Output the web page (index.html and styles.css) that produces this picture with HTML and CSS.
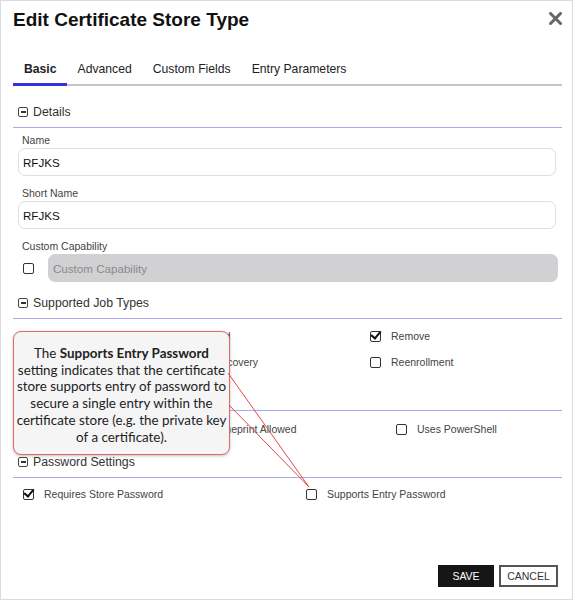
FILE: index.html
```html
<!DOCTYPE html>
<html lang="en">
<head>
    <meta charset="UTF-8">
    <meta name="viewport" content="width=device-width, initial-scale=1.0">
    <title>Edit Certificate Store Type</title>
    <link rel="stylesheet" href="styles.css">
</head>
<body>
  <div class="dialog">

    <div class="dialog-head">
      <h1>Edit Certificate Store Type</h1>
      <button class="close" type="button">
        <svg width="13" height="13" viewBox="0 0 13 13"><path d="M1.5 1.5 L11.5 11.5 M11.5 1.5 L1.5 11.5" stroke="#666" stroke-width="3" stroke-linecap="square"/></svg>
      </button>
    </div>

    <div class="tabs">
      <span class="tab active">Basic</span>
      <span class="tab">Advanced</span>
      <span class="tab">Custom Fields</span>
      <span class="tab">Entry Parameters</span>
    </div>

    <!-- details -->
    <div class="group first">
      <div class="group-title"><span class="toggle"></span>Details</div>
      <div class="group-body fields">
        <label class="field-label">Name</label>
        <div class="text-input">RFJKS</div>
        <label class="field-label">Short Name</label>
        <div class="text-input">RFJKS</div>
        <label class="field-label">Custom Capability</label>
        <div class="capability">
          <span class="box"></span>
          <div class="text-input disabled">Custom Capability</div>
        </div>
      </div>
    </div>

    <!-- job types -->
    <div class="group">
      <div class="group-title"><span class="toggle"></span>Supported Job Types</div>
      <div class="group-body checks jobs">
        <div class="check"><span class="box"></span>Inventory</div>
        <div class="check"><span class="box"></span>Add</div>
        <div class="check"><span class="box on"></span>Remove</div>
        <div class="check"><span class="box"></span>Create</div>
        <div class="check"><span class="box"></span>Discovery</div>
        <div class="check"><span class="box"></span>Reenrollment</div>
      </div>
    </div>

    <div class="group">
      <div class="group-title"><span class="toggle"></span>General Settings</div>
      <div class="group-body checks general">
        <div class="check"><span class="box"></span>Needs Server</div>
        <div class="check"><span class="box"></span>Blueprint Allowed</div>
        <div class="check"><span class="box"></span>Uses PowerShell</div>
      </div>
    </div>

    <div class="group">
      <div class="group-title"><span class="toggle"></span>Password Settings</div>
      <div class="group-body checks passwords">
        <div class="check"><span class="box on"></span>Requires Store Password</div>
        <div class="check"><span class="box"></span>Supports Entry Password</div>
      </div>
    </div>

    <div class="actions">
      <button class="btn save" type="button">SAVE</button>
      <button class="btn cancel" type="button">CANCEL</button>
    </div>

    <!-- callout -->
    <div class="callout">
      The <b>Supports Entry Password</b> setting indicates that the certificate store supports entry of password to secure a single entry within the certificate store (e.g. the private key of a certificate).
    </div>
    <svg class="pointer" width="574" height="601" viewBox="0 0 574 601">
      <polyline points="228,373 309,487 229,405" fill="none" stroke="#e2484b" stroke-width="1"/>
    </svg>
  </div>
</body>
</html>
```

FILE: styles.css
```css
* {
  box-sizing: border-box;
}

body {
  margin: 0;
  background: #fff;
  font-family: "Liberation Sans", Arial, sans-serif;
  color: #333;
}

.dialog {
  position: relative;
  width: 573px;
  height: 600px;
  border: 1px solid #dcdcdc;
  padding: 0 10px 12px 12px;
  display: flex;
  flex-direction: column;
  background: #fff;
}

.dialog-head {
  display: flex;
  justify-content: space-between;
  align-items: flex-start;
  padding-top: 8px;
}

.dialog-head h1 {
  margin: 0;
  font-size: 19px;
  line-height: 22px;
  font-weight: bold;
  color: #111;
}

.close {
  border: 0;
  background: none;
  padding: 0;
  margin: 3px 0 0 0;
  line-height: 0;
}

/* tabs */
.tabs {
  display: flex;
  margin-top: 30px;
  border-bottom: 2px solid #c6c6c6;
}

.tab {
  font-size: 12.2px;
  line-height: 16px;
  padding: 0 10px 6px 11px;
  color: #222;
  margin-bottom: -2px;
  border-bottom: 3px solid transparent;
}

.tab.active {
  font-weight: bold;
  border-bottom-color: #3434d6;
}

/* groups */
.group-title {
  display: flex;
  align-items: center;
  height: 26px;
  padding: 0 0 5px 5px;
  border-bottom: 1px solid #a9a9f3;
  font-size: 12.3px;
  color: #333;
}

.group.first .group-title {
  margin-top: 16px;
}

.toggle {
  width: 10px;
  height: 10px;
  border: 1.3px solid #444;
  border-radius: 2px;
  margin-right: 5px;
  position: relative;
}

.toggle::after {
  content: "";
  position: absolute;
  left: 1.5px;
  right: 1.5px;
  top: 3.3px;
  height: 1.4px;
  background: #333;
}

.fields {
  display: flex;
  flex-direction: column;
  padding: 5px 6px 11px 5px;
}

.field-label {
  font-size: 10.5px;
  line-height: 14px;
  color: #444;
  padding-left: 4px;
  margin-bottom: 1px;
}

.text-input {
  height: 28px;
  border: 1px solid #dedede;
  border-radius: 7px;
  padding: 0 4px;
  display: flex;
  align-items: center;
  font-size: 11.6px;
  color: #111;
  margin-bottom: 10px;
}

.fields .text-input:last-child,
.capability .text-input {
  margin-bottom: 0;
}

.capability {
  display: flex;
  align-items: center;
  gap: 4px;
  padding-left: 5px;
  margin-right: -2px;
}

.text-input.disabled {
  flex: 1;
  background: #d1d1d3;
  border-color: #d1d1d3;
  color: #8a8a8a;
}

/* check lists */
.checks {
  display: grid;
  row-gap: 8px;
  padding: 8px 0 14px 9px;
}

.jobs {
  grid-template-columns: 169px 179px auto;
}

.general {
  grid-template-columns: 173px 201px auto;
  padding-top: 9px;
}

.passwords {
  grid-template-columns: 283px auto;
  padding-top: 7px;
  padding-left: 10px;
}

.check {
  display: flex;
  align-items: center;
  height: 18px;
  font-size: 10.5px;
  color: #444;
}

.box {
  flex: none;
  width: 11px;
  height: 11px;
  border: 1.5px solid #333;
  border-radius: 2px;
  margin-right: 10px;
  position: relative;
}

.box.on::after {
  content: "";
  position: absolute;
  left: 1.5px;
  top: -2.5px;
  width: 4px;
  height: 8px;
  border: solid #111;
  border-width: 0 2.4px 2.4px 0;
  transform: rotate(40deg);
}

/* footer */
.actions {
  margin-top: auto;
  display: flex;
  justify-content: flex-end;
  gap: 5px;
  padding-right: 4px;
}

.btn {
  height: 22px;
  font-family: "Liberation Sans", Arial, sans-serif;
  font-size: 10.5px;
  padding: 0;
  cursor: pointer;
}

.save {
  width: 56px;
  background: #161616;
  border: 1px solid #161616;
  color: #fff;
}

.cancel {
  width: 59px;
  background: #fff;
  border: 2px solid #555;
  color: #333;
}

/* callout over the form */
.callout {
  position: absolute;
  left: 12px;
  top: 330px;
  width: 217px;
  height: 124px;
  padding: 13px 1px 8px;
  background: #f5f5f5;
  border: 1.5px solid #e2676a;
  border-radius: 8px;
  box-shadow: 0 1px 3px rgba(0, 0, 0, 0.25);
  font-family: Lato, "Noto Sans", sans-serif;
  font-size: 13.4px;
  line-height: 16.7px;
  text-align: center;
  color: #222;
}

.callout b {
  font-weight: bold;
}

.pointer {
  position: absolute;
  left: -1px;
  top: -1px;
  pointer-events: none;
}
```
